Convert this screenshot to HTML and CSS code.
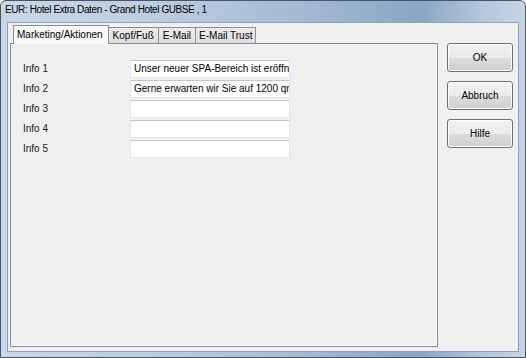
FILE: index.html
```html
<!DOCTYPE html>
<html lang="de">
<head>
<meta charset="utf-8">
<title>EUR: Hotel Extra Daten</title>
<link rel="stylesheet" href="styles.css">
</head>
<body>
<div class="window">
  <div class="titlebar">EUR: Hotel Extra Daten - Grand Hotel GUBSE , 1</div>
  <div class="client">
    <div class="tabctl">
      <div class="tabs">
        <div class="tab active">Marketing/Aktionen</div>
        <div class="tab">Kopf/Fuß</div>
        <div class="tab">E-Mail</div>
        <div class="tab">E-Mail Trust</div>
      </div>
      <div class="panel">
        <div class="form">
          <label class="lbl">Info 1</label>
          <div class="field">Unser neuer SPA-Bereich ist eröffnet</div>
          <label class="lbl">Info 2</label>
          <div class="field">Gerne erwarten wir Sie auf 1200 qm</div>
          <label class="lbl">Info 3</label>
          <div class="field"></div>
          <label class="lbl">Info 4</label>
          <div class="field"></div>
          <label class="lbl">Info 5</label>
          <div class="field"></div>
        </div>
      </div>
    </div>
    <div class="buttons">
      <div class="btn">OK</div>
      <div class="btn">Abbruch</div>
      <div class="btn">Hilfe</div>
    </div>
  </div>
</div>
</body>
</html>
```
FILE: styles.css
```css
html, body {
  margin: 0;
  padding: 0;
  background: #ffffff;
}
body {
  font-family: "Liberation Sans", Arial, sans-serif;
  font-size: 10px;
  color: #000;
}
.window {
  width: 526px;
  height: 358px;
  box-sizing: border-box;
  border: 1px solid #4a5563;
  border-radius: 6px 6px 0 0;
  background: linear-gradient(90deg, #c9d7e7 0%, #bccde1 30%, #a6bcd5 55%, #89a5c5 80%, #b5c8dc 92%, #c6d4e4 100%);
  padding: 0 6px 5px 6px;
  display: flex;
  flex-direction: column;
}
.titlebar {
  height: 21px;
  line-height: 18px;
  margin-left: -2px;
  font-size: 10px;
  letter-spacing: -0.4px;
  color: #000;
  white-space: nowrap;
}
.client {
  flex: 1;
  background: #f0f0f0;
  border: 1px solid #8da2bb;
  display: flex;
  padding: 2px 5px 4px 2px;
  box-sizing: border-box;
}
.tabctl {
  width: 428px;
  display: flex;
  flex-direction: column;
}
.tabs {
  height: 18px;
  display: flex;
  align-items: flex-end;
  padding-left: 3px;
  position: relative;
  z-index: 1;
}
.tab {
  height: 16px;
  line-height: 15px;
  padding: 0 4px;
  border: 1px solid #898c95;
  border-bottom: none;
  border-left: none;
  background: linear-gradient(#ececec, #dedede);
  box-sizing: border-box;
  white-space: nowrap;
}
.tab:last-child {
  padding: 0 3px;
}
.tab.active {
  height: 19px;
  line-height: 18px;
  margin-bottom: -1px;
  border-left: 1px solid #898c95;
  padding: 0 5px 0 3px;
  background: #f7f7f7;
}
.panel {
  flex: 1;
  border: 1px solid #898c95;
  background: #f0f0f0;
  box-shadow: inset -1px -1px 0 #ffffff;
  padding: 16px 0 0 12px;
}
.form {
  display: grid;
  grid-template-columns: 107px 160px;
  grid-auto-rows: 18px;
  row-gap: 2px;
  align-items: center;
}
.lbl {
  line-height: 18px;
  color: #1a1a1a;
}
.field {
  height: 18px;
  box-sizing: border-box;
  background: #fff;
  border: 1px solid #e2e6eb;
  border-top-color: #c3c6cb;
  padding-left: 3px;
  line-height: 16px;
  overflow: hidden;
  white-space: nowrap;
}
.buttons {
  margin-left: 9px;
  padding-top: 18px;
  display: flex;
  flex-direction: column;
  gap: 9px;
}
.btn {
  width: 66px;
  height: 29px;
  box-sizing: border-box;
  border: 1px solid #707070;
  border-radius: 3px;
  background: linear-gradient(#f2f2f2 0%, #ebebeb 50%, #dddddd 51%, #cfcfcf 100%);
  box-shadow: inset 0 0 0 1px #fcfcfc;
  display: flex;
  align-items: center;
  justify-content: center;
}
```
